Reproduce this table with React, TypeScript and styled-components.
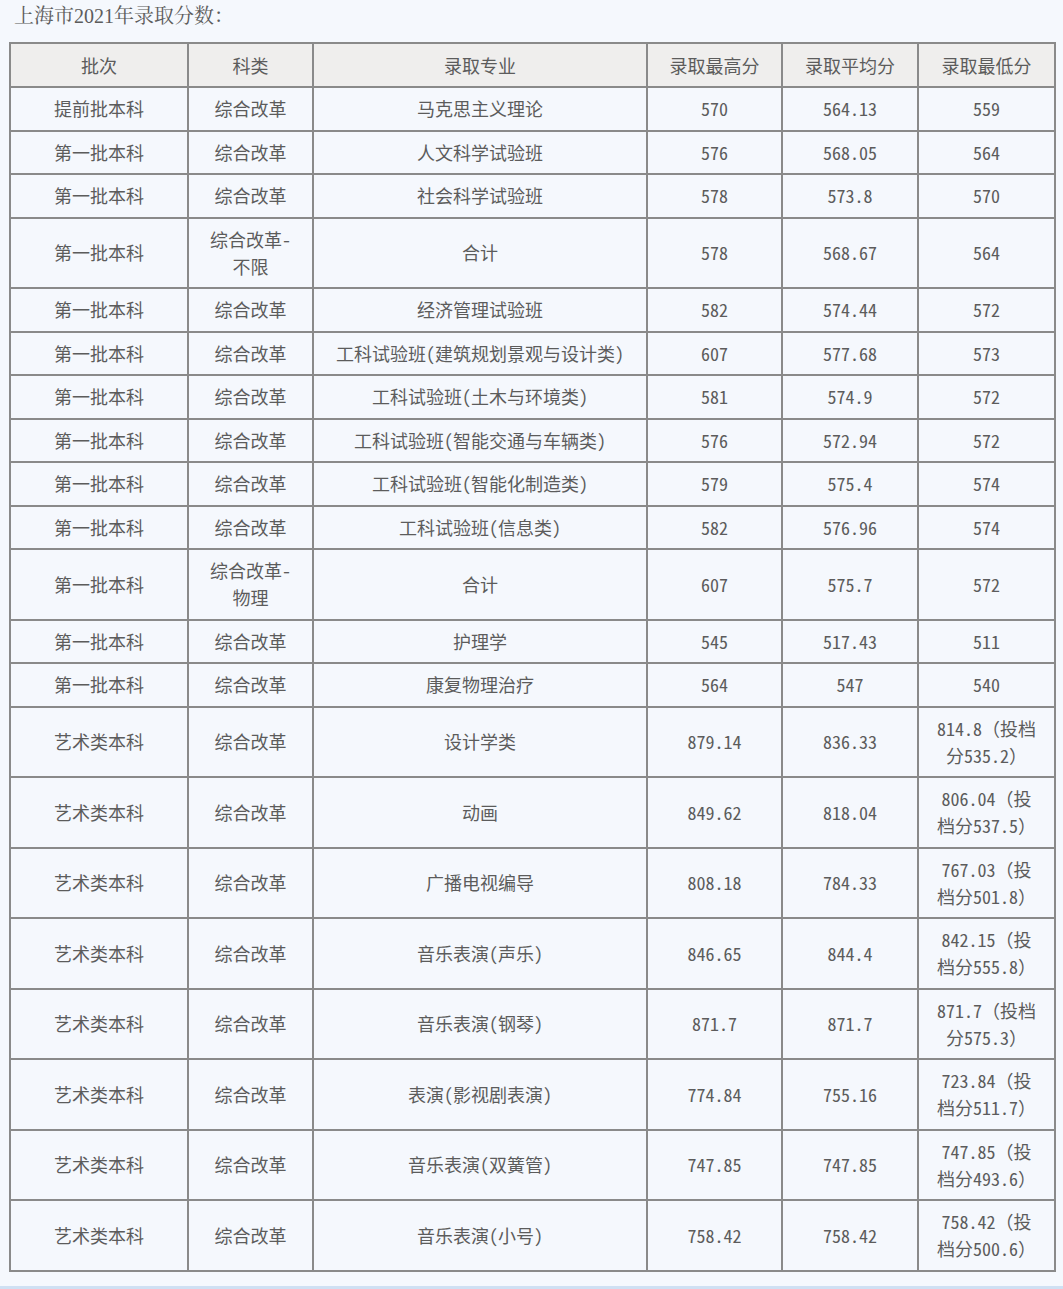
import React from "react";
import styled, { createGlobalStyle } from "styled-components";

const Global = createGlobalStyle`
  html, body { margin: 0; padding: 0; background: #f5f8fd; }
  body { font-family: "Noto Sans CJK SC", sans-serif; color: #5c5c5c; }
`;

const Page = styled.div`
  width: 1063px;
  min-height: 1289px;
  box-sizing: border-box;
  display: flex;
  flex-direction: column;
`;

const Title = styled.div`
  font-family: "Liberation Serif", "Noto Serif CJK SC", "Noto Sans CJK SC", serif;
  font-size: 20px;
  line-height: 32px;
  color: #5c5c5c;
  padding-left: 14px;
  margin-bottom: 10px;
`;

const TableWrap = styled.div`
  padding-left: 9px;
`;

const Table = styled.table`
  border-collapse: collapse;
  table-layout: fixed;
  width: 1047px;
  font-family: "Noto Sans Mono CJK SC", "Noto Sans CJK SC", sans-serif;
  font-size: 18px;
  color: #5c5c5c;
`;

const HeadCell = styled.th`
  border: 2px solid #8a8a8a;
  background: #efeeed;
  font-weight: normal;
  line-height: 27px;
  padding: 7.5px 15px;
  text-align: center;
  vertical-align: middle;
`;

const Cell = styled.td`
  border: 2px solid #8a8a8a;
  line-height: 27px;
  padding: 7.25px 15px;
  text-align: center;
  vertical-align: middle;
  word-break: normal;
`;

const BottomLine = styled.div`
  margin-top: auto;
  height: 3px;
  background: #cfe0f3;
`;

const cols = [178, 125, 334, 135, 136, 137];
const headers = ["批次", "科类", "录取专业", "录取最高分", "录取平均分", "录取最低分"];

const rows: string[][] = [
  ["提前批本科", "综合改革", "马克思主义理论", "570", "564.13", "559"],
  ["第一批本科", "综合改革", "人文科学试验班", "576", "568.05", "564"],
  ["第一批本科", "综合改革", "社会科学试验班", "578", "573.8", "570"],
  ["第一批本科", "综合改革-不限", "合计", "578", "568.67", "564"],
  ["第一批本科", "综合改革", "经济管理试验班", "582", "574.44", "572"],
  ["第一批本科", "综合改革", "工科试验班(建筑规划景观与设计类)", "607", "577.68", "573"],
  ["第一批本科", "综合改革", "工科试验班(土木与环境类)", "581", "574.9", "572"],
  ["第一批本科", "综合改革", "工科试验班(智能交通与车辆类)", "576", "572.94", "572"],
  ["第一批本科", "综合改革", "工科试验班(智能化制造类)", "579", "575.4", "574"],
  ["第一批本科", "综合改革", "工科试验班(信息类)", "582", "576.96", "574"],
  ["第一批本科", "综合改革-物理", "合计", "607", "575.7", "572"],
  ["第一批本科", "综合改革", "护理学", "545", "517.43", "511"],
  ["第一批本科", "综合改革", "康复物理治疗", "564", "547", "540"],
  ["艺术类本科", "综合改革", "设计学类", "879.14", "836.33", "814.8（投档分535.2）"],
  ["艺术类本科", "综合改革", "动画", "849.62", "818.04", "806.04（投档分537.5）"],
  ["艺术类本科", "综合改革", "广播电视编导", "808.18", "784.33", "767.03（投档分501.8）"],
  ["艺术类本科", "综合改革", "音乐表演(声乐)", "846.65", "844.4", "842.15（投档分555.8）"],
  ["艺术类本科", "综合改革", "音乐表演(钢琴)", "871.7", "871.7", "871.7（投档分575.3）"],
  ["艺术类本科", "综合改革", "表演(影视剧表演)", "774.84", "755.16", "723.84（投档分511.7）"],
  ["艺术类本科", "综合改革", "音乐表演(双簧管)", "747.85", "747.85", "747.85（投档分493.6）"],
  ["艺术类本科", "综合改革", "音乐表演(小号)", "758.42", "758.42", "758.42（投档分500.6）"],
];

export default function App() {
  return (
    <Page>
      <Global />
      <Title>上海市2021年录取分数：</Title>
      <TableWrap>
        <Table>
          <colgroup>
            {cols.map((w, i) => (
              <col key={i} style={{ width: w }} />
            ))}
          </colgroup>
          <thead>
            <tr>
              {headers.map((h) => (
                <HeadCell key={h}>{h}</HeadCell>
              ))}
            </tr>
          </thead>
          <tbody>
            {rows.map((r, i) => (
              <tr key={i}>
                {r.map((c, j) => (
                  <Cell key={j}>{c}</Cell>
                ))}
              </tr>
            ))}
          </tbody>
        </Table>
      </TableWrap>
      <BottomLine />
    </Page>
  );
}
